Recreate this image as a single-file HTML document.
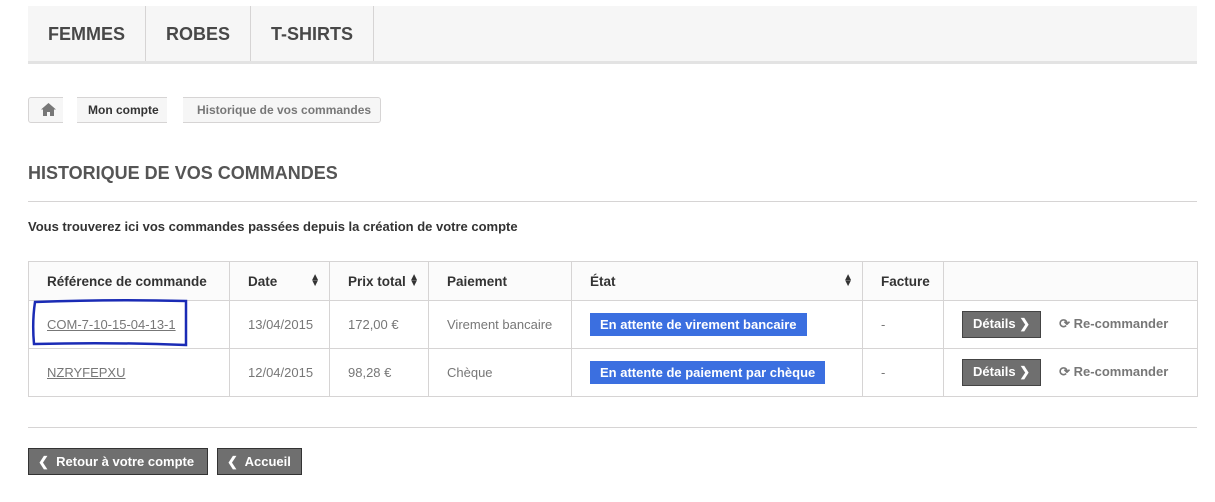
<!DOCTYPE html>
<html><head><meta charset="utf-8"><style>
*{box-sizing:border-box;margin:0;padding:0}
body{width:1215px;height:502px;background:#fff;font-family:"Liberation Sans",Arial,sans-serif;color:#333;position:relative;overflow:hidden}
.abs{position:absolute}
.nav{left:28px;top:6px;width:1169px;height:58px;background:#f6f6f6;border-bottom:3px solid #e3e3e3}
.nav div{position:absolute;top:0;height:55px;line-height:57px;font-weight:bold;font-size:18px;color:#484848;text-align:center;border-right:1px solid #d6d4d4}
.bc{left:28px;top:97px;width:353px;height:26px;border:1px solid #d6d4d4;border-radius:3px;background:#f6f6f6;font-size:12px;font-weight:bold}
.title{left:28px;top:163px;font-size:18px;font-weight:bold;color:#555}
.hr{left:28px;width:1169px;height:1px;background:#d6d4d4}
.intro{left:28px;top:219px;font-size:13px;font-weight:bold;color:#333}
table{position:absolute;left:28px;top:261px;width:1170px;border-collapse:collapse;font-size:13px}
td,th{border:1px solid #d6d4d4;padding:0 0 0 18px;text-align:left;color:#777;position:relative}
th{height:39px;background:#fbfbfb;color:#333;font-weight:bold;font-size:13.5px}
td{height:48px}
a{color:#777;text-decoration:underline}
.lab{background:#3b6fe0;color:#fff;font-weight:bold;padding:4px 10px;font-size:13px}
.sort{position:absolute;right:9px;top:13px;font-size:10px;line-height:6px;color:#333}
.det{display:inline-block;background:#6f6f6f;border:1px solid #444;color:#fff;font-weight:bold;font-size:13px;padding:4px 10px 5px}
.re{margin-left:18px;font-weight:bold;color:#777}
.btn{top:448px;height:27px;background:#6f6f6f;border:1px solid #333;color:#fff;font-weight:bold;font-size:13px;line-height:25px;padding-left:9px}
</style></head><body>
<div class="abs nav">
<div style="left:0;width:118px">FEMMES</div>
<div style="left:118px;width:105px">ROBES</div>
<div style="left:223px;width:123px">T-SHIRTS</div>
</div>
<div class="abs bc">
<svg class="abs" style="left:12px;top:5px" width="15" height="13" viewBox="0 0 15 13"><path d="M7.5 0L0 6.5h2V13h4V9h3v4h4V6.5h2z" fill="#777"/></svg>
<div class="abs" style="left:34px;top:-1px;width:14px;height:26px;background:#fff"></div>
<span class="abs" style="left:59px;top:5px;color:#333">Mon compte</span>
<div class="abs" style="left:138px;top:-1px;width:16px;height:26px;background:#fff"></div>
<span class="abs" style="left:168px;top:5px;color:#777">Historique de vos commandes</span>
</div>
<div class="abs title">HISTORIQUE DE VOS COMMANDES</div>
<div class="abs hr" style="top:201px"></div>
<div class="abs intro">Vous trouverez ici vos commandes passées depuis la création de votre compte</div>
<table>
<tr><th style="width:201px">Référence de commande</th><th style="width:100px">Date<span class="sort">▲<br>▼</span></th><th style="width:99px">Prix total<span class="sort">▲<br>▼</span></th><th style="width:143px">Paiement</th><th style="width:291px">État<span class="sort">▲<br>▼</span></th><th style="width:81px">Facture</th><th></th></tr>
<tr><td><a>COM-7-10-15-04-13-1</a></td><td>13/04/2015</td><td>172,00 €</td><td>Virement bancaire</td><td><span class="lab">En attente de virement bancaire</span></td><td>-</td><td><span class="det">Détails ❯</span><span class="re">⟳ Re-commander</span></td></tr>
<tr><td><a>NZRYFEPXU</a></td><td>12/04/2015</td><td>98,28 €</td><td>Chèque</td><td><span class="lab">En attente de paiement par chèque</span></td><td>-</td><td><span class="det">Détails ❯</span><span class="re">⟳ Re-commander</span></td></tr>
</table>
<svg class="abs" style="left:30px;top:297px" width="160" height="52"><path d="M5 5 Q80 2 156 4 L156 48 Q80 45 4 47 Q2 25 5 5Z" fill="none" stroke="#1a2bb5" stroke-width="2.5"/></svg>
<div class="abs hr" style="top:427px"></div>
<div class="abs btn" style="left:28px;width:180px">❮&nbsp; Retour à votre compte</div>
<div class="abs btn" style="left:217px;width:85px">❮&nbsp; Accueil</div>
</body></html>
